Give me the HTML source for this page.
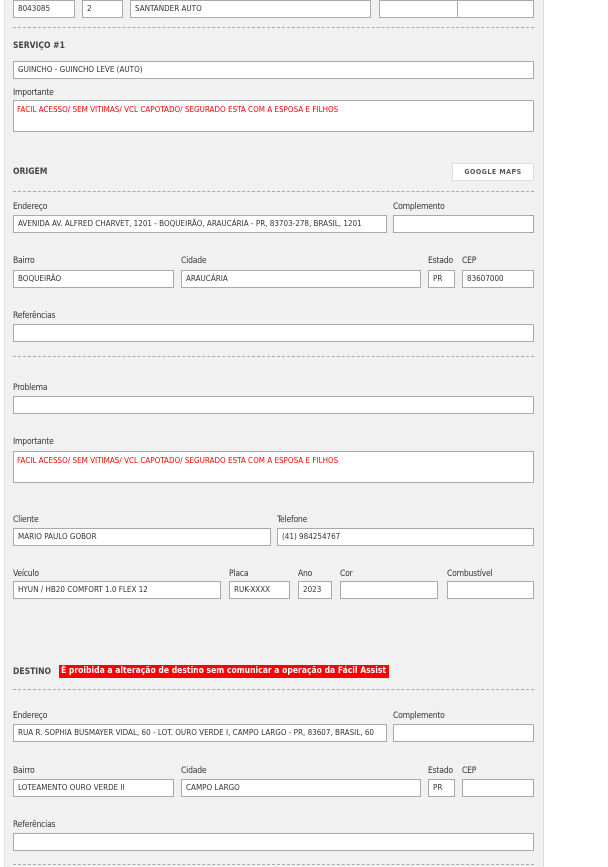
<!DOCTYPE html>
<html><head><meta charset="utf-8"><style>
*{box-sizing:border-box;margin:0;padding:0}
body{width:608px;height:867px;overflow:hidden;background:#fff;font-family:"DejaVu Sans Condensed","DejaVu Sans","Liberation Sans",sans-serif;font-size:8px;color:#333;position:relative}
#p{position:absolute;left:4px;top:0;width:540px;height:867px;background:#f1f1f1;border-right:1px solid #ddd;border-left:1px solid #e4e4e4}
.i{position:absolute;background:#fff;border:1px solid #a9a9a9;height:18px;padding:0 4px;line-height:16px;font-size:8px;color:#333;white-space:nowrap;overflow:hidden}
.t{position:absolute;background:#fff;border:1px solid #a9a9a9;padding:4px 3px;font-size:8px;color:#f00;height:32px;white-space:nowrap}
.l{position:absolute;font-size:8.5px;color:#333;letter-spacing:-0.2px}
.h{position:absolute;font-weight:bold;font-size:8.5px;color:#444}
.d{position:absolute;left:13px;width:521px;border-top:1px dashed #aaa}
</style></head><body>
<div id="p"></div>
<div class="i" style="left:13px;top:0;width:62px">8043085</div>
<div class="i" style="left:82px;top:0;width:41px">2</div>
<div class="i" style="left:130px;top:0;width:241px">SANTANDER AUTO</div>
<div class="i" style="left:379px;top:0;width:79px"></div>
<div class="i" style="left:457px;top:0;width:77px"></div>
<div class="d" style="top:27px"></div>
<div class="h" style="left:13px;top:41px">SERVIÇO #1</div>
<div class="i" style="left:13px;top:61px;width:521px">GUINCHO - GUINCHO LEVE (AUTO)</div>
<div class="l" style="left:13px;top:88px">Importante</div>
<div class="t" style="left:13px;top:100px;width:521px">FACIL ACESSO/ SEM VITIMAS/ VCL CAPOTADO/ SEGURADO ESTA COM A ESPOSA E FILHOS</div>
<div class="h" style="left:13px;top:167px">ORIGEM</div>
<div style="position:absolute;left:452px;top:163px;width:82px;height:18px;background:#fff;border:1px solid #ddd;font-size:7px;font-weight:bold;color:#555;text-align:center;line-height:16px;letter-spacing:0.5px">GOOGLE MAPS</div>
<div class="d" style="top:191px"></div>
<div class="l" style="left:13px;top:202px">Endereço</div>
<div class="l" style="left:393px;top:202px">Complemento</div>
<div class="i" style="left:13px;top:215px;width:374px">AVENIDA AV. ALFRED CHARVET, 1201 - BOQUEIRÃO, ARAUCÁRIA - PR, 83703-278, BRASIL, 1201</div>
<div class="i" style="left:393px;top:215px;width:141px"></div>
<div class="l" style="left:13px;top:256px">Bairro</div>
<div class="l" style="left:181px;top:256px">Cidade</div>
<div class="l" style="left:428px;top:256px">Estado</div>
<div class="l" style="left:462px;top:256px">CEP</div>
<div class="i" style="left:13px;top:270px;width:161px">BOQUEIRÃO</div>
<div class="i" style="left:181px;top:270px;width:240px">ARAUCÁRIA</div>
<div class="i" style="left:428px;top:270px;width:27px">PR</div>
<div class="i" style="left:462px;top:270px;width:72px">83607000</div>
<div class="l" style="left:13px;top:311px">Referências</div>
<div class="i" style="left:13px;top:324px;width:521px"></div>
<div class="d" style="top:356px"></div>
<div class="l" style="left:13px;top:383px">Problema</div>
<div class="i" style="left:13px;top:396px;width:521px"></div>
<div class="l" style="left:13px;top:437px">Importante</div>
<div class="t" style="left:13px;top:451px;width:521px">FACIL ACESSO/ SEM VITIMAS/ VCL CAPOTADO/ SEGURADO ESTA COM A ESPOSA E FILHOS</div>
<div class="l" style="left:13px;top:515px">Cliente</div>
<div class="l" style="left:277px;top:515px">Telefone</div>
<div class="i" style="left:13px;top:528px;width:258px">MARIO PAULO GOBOR</div>
<div class="i" style="left:277px;top:528px;width:257px">(41) 984254767</div>
<div class="l" style="left:13px;top:569px">Veículo</div>
<div class="l" style="left:229px;top:569px">Placa</div>
<div class="l" style="left:298px;top:569px">Ano</div>
<div class="l" style="left:340px;top:569px">Cor</div>
<div class="l" style="left:447px;top:569px">Combustível</div>
<div class="i" style="left:13px;top:581px;width:208px">HYUN / HB20 COMFORT 1.0 FLEX 12</div>
<div class="i" style="left:229px;top:581px;width:61px">RUK-XXXX</div>
<div class="i" style="left:298px;top:581px;width:34px">2023</div>
<div class="i" style="left:340px;top:581px;width:98px"></div>
<div class="i" style="left:447px;top:581px;width:87px"></div>
<div class="h" style="left:13px;top:667px">DESTINO</div>
<div style="position:absolute;left:59px;top:665px;width:330px;height:13px;background:#f00;color:#fff;font-weight:bold;font-size:8.5px;line-height:13px;padding-left:2px;white-space:nowrap;overflow:hidden">É proibida a alteração de destino sem comunicar a operação da Fácil Assist</div>
<div class="d" style="top:689px"></div>
<div class="l" style="left:13px;top:711px">Endereço</div>
<div class="l" style="left:393px;top:711px">Complemento</div>
<div class="i" style="left:13px;top:724px;width:374px">RUA R. SOPHIA BUSMAYER VIDAL, 60 - LOT. OURO VERDE I, CAMPO LARGO - PR, 83607, BRASIL, 60</div>
<div class="i" style="left:393px;top:724px;width:141px"></div>
<div class="l" style="left:13px;top:766px">Bairro</div>
<div class="l" style="left:181px;top:766px">Cidade</div>
<div class="l" style="left:428px;top:766px">Estado</div>
<div class="l" style="left:462px;top:766px">CEP</div>
<div class="i" style="left:13px;top:779px;width:161px">LOTEAMENTO OURO VERDE II</div>
<div class="i" style="left:181px;top:779px;width:240px">CAMPO LARGO</div>
<div class="i" style="left:428px;top:779px;width:27px">PR</div>
<div class="i" style="left:462px;top:779px;width:72px"></div>
<div class="l" style="left:13px;top:820px">Referências</div>
<div class="i" style="left:13px;top:833px;width:521px"></div>
<div class="d" style="top:864px"></div>
</body></html>
